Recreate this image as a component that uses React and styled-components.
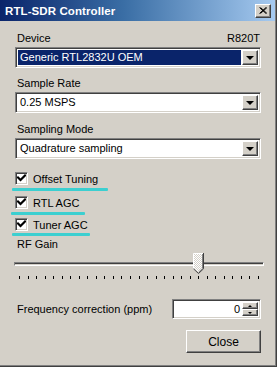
import React from 'react';
import styled, { createGlobalStyle, css } from 'styled-components';

const GlobalStyle = createGlobalStyle`
  html, body {
    margin: 0;
    padding: 0;
    background: #d4d0c8;
  }
  body {
    font-family: 'Liberation Sans', Arial, sans-serif;
    font-size: 11px;
    color: #000;
  }
`;

const sunken = css`
  border: 1px solid;
  border-color: #808080 #fff #fff #808080;
  box-shadow: inset 1px 1px 0 #404040, inset -1px -1px 0 #d4d0c8;
`;

const raised = css`
  border: 1px solid;
  border-color: #fff #404040 #404040 #fff;
  box-shadow: inset -1px -1px 0 #808080, inset 1px 1px 0 #d4d0c8;
`;

const Window = styled.div`
  width: 277px;
  height: 367px;
  box-sizing: border-box;
  background: #d4d0c8;
  border-right: 1px solid #404040;
  border-bottom: 1px solid #404040;
  box-shadow: inset -1px -1px 0 #808080;
  display: flex;
  flex-direction: column;
`;

const TitleBar = styled.div`
  height: 21px;
  margin-right: 1px;
  background: linear-gradient(90deg, #0a246a 0%, #3a6ea5 45%, #a6caf0 100%);
  display: flex;
  align-items: center;
  justify-content: space-between;
  padding: 0 4px 0 5px;
`;

const Title = styled.span`
  color: #fff;
  font-weight: bold;
  font-size: 11.5px;
  letter-spacing: 0.1px;
`;

const CloseBox = styled.div`
  width: 16px;
  height: 14px;
  box-sizing: border-box;
  background: #d4d0c8;
  ${raised};
  display: flex;
  align-items: center;
  justify-content: center;
`;

const Body = styled.div`
  display: flex;
  flex-direction: column;
  padding: 11px 15px 0 15px;
`;

const LabelRow = styled.div`
  height: 13px;
  line-height: 13px;
  margin-top: ${({ $mt }) => $mt || 0}px;
  padding: 0 1px 0 2px;
  display: flex;
  justify-content: space-between;
`;

const Combo = styled.div`
  height: 21px;
  margin-top: 2px;
  box-sizing: border-box;
  background: #fff;
  ${sunken};
  display: flex;
  align-items: stretch;
  padding: 2px;
`;

const ComboText = styled.div`
  flex: 1;
  margin-right: 1px;
  padding-left: 2px;
  line-height: 15px;
  white-space: nowrap;
  overflow: hidden;
  ${({ $selected }) => $selected && `
    background: #0a246a;
    color: #fff;
  `}
`;

const DropButton = styled.div`
  width: 16px;
  box-sizing: border-box;
  background: #d4d0c8;
  ${raised};
  display: flex;
  align-items: center;
  justify-content: center;
`;

const Arrow = styled.span`
  width: 0;
  height: 0;
  border-left: ${({ $size }) => $size || 4}px solid transparent;
  border-right: ${({ $size }) => $size || 4}px solid transparent;
  ${({ $up, $size }) => $up
    ? `border-bottom: ${($size || 4)}px solid #000;`
    : `border-top: ${($size || 4)}px solid #000;`}
`;

const CheckRow = styled.div`
  height: 13px;
  margin-top: ${({ $mt }) => $mt}px;
  display: flex;
  align-items: center;
  gap: 5px;
`;

const CheckBox = styled.div`
  width: 13px;
  height: 13px;
  box-sizing: border-box;
  background: #fff;
  ${sunken};
  display: flex;
  align-items: center;
  justify-content: center;
`;

const Highlight = styled.div`
  height: 3px;
  width: ${({ $w }) => $w}px;
  margin: ${({ $mt }) => $mt}px 0 0 ${({ $ml }) => $ml}px;
  background: #3ccfd0;
  border-radius: 1px;
`;

const SliderArea = styled.div`
  position: relative;
  height: 21px;
  margin: 2px 0 0 -1px;
  width: 250px;
  display: flex;
  align-items: center;
`;

const Track = styled.div`
  width: 100%;
  height: 4px;
  box-sizing: border-box;
  border: 1px solid;
  border-color: #808080 #fff #fff #808080;
  background: #404040;
  box-shadow: inset 0 -1px 0 #d4d0c8;
`;

const Thumb = styled.svg`
  position: absolute;
  top: 0;
`;

const Ticks = styled.div`
  position: relative;
  height: 4px;
  margin: 2px 0 0 -1px;
  width: 250px;
`;

const Tick = styled.span`
  position: absolute;
  top: 0;
  width: 1px;
  height: 3px;
  background: #000;
`;

const FreqRow = styled.div`
  margin-top: 19px;
  display: flex;
  align-items: center;
  justify-content: space-between;
  padding-left: 2px;
`;

const SpinBox = styled.div`
  width: 89px;
  height: 20px;
  box-sizing: border-box;
  background: #fff;
  ${sunken};
  display: flex;
  padding: 2px;
`;

const SpinValue = styled.div`
  flex: 1;
  text-align: right;
  line-height: 14px;
  padding-right: 2px;
`;

const SpinButtons = styled.div`
  width: 16px;
  display: flex;
  flex-direction: column;
`;

const SpinButton = styled.div`
  flex: 1;
  box-sizing: border-box;
  background: #d4d0c8;
  ${raised};
  display: flex;
  align-items: center;
  justify-content: center;
`;

const Footer = styled.div`
  margin-top: 11px;
  display: flex;
  justify-content: flex-end;
`;

const Button = styled.div`
  width: 75px;
  height: 23px;
  box-sizing: border-box;
  background: #d4d0c8;
  ${raised};
  display: flex;
  align-items: center;
  justify-content: center;
  font-size: 12px;
`;

const Check = () => (
  <svg width="9" height="9" viewBox="0 0 9 9">
    <path d="M1 3.5 L3.5 6 L8 1.5" fill="none" stroke="#000" strokeWidth="2.2" strokeLinecap="square" />
  </svg>
);

const checks = [
  { label: 'Offset Tuning', mt: 13, hl: { w: 96, mt: 3, ml: -3 } },
  { label: 'RTL AGC', mt: 5, hl: { w: 74, mt: 3, ml: -4 } },
  { label: 'Tuner AGC', mt: 3, hl: { w: 78, mt: 2, ml: -3 } },
];

const TICKS = 29;
const GAIN_INDEX = 21;

export default function App() {
  const span = 250 - 11;
  const thumbLeft = Math.round((GAIN_INDEX / (TICKS - 1)) * span);

  return (
    <>
      <GlobalStyle />
      <Window>
        <TitleBar>
          <Title>RTL-SDR Controller</Title>
          <CloseBox>
            <svg width="8" height="7" viewBox="0 0 8 7">
              <path d="M0.5 0.5 L7 6.5 M1.5 0.5 L8 6.5 M7 0.5 L0.5 6.5 M8 0.5 L1.5 6.5" stroke="#000" strokeWidth="1" />
            </svg>
          </CloseBox>
        </TitleBar>
        <Body>
          <LabelRow>
            <span>Device</span>
            <span>R820T</span>
          </LabelRow>
          <Combo>
            <ComboText $selected>Generic RTL2832U OEM</ComboText>
            <DropButton><Arrow /></DropButton>
          </Combo>

          <LabelRow $mt={9}><span>Sample Rate</span></LabelRow>
          <Combo>
            <ComboText>0.25 MSPS</ComboText>
            <DropButton><Arrow /></DropButton>
          </Combo>

          <LabelRow $mt={10}><span>Sampling Mode</span></LabelRow>
          <Combo>
            <ComboText>Quadrature sampling</ComboText>
            <DropButton><Arrow /></DropButton>
          </Combo>

          {checks.map((c) => (
            <React.Fragment key={c.label}>
              <CheckRow $mt={c.mt}>
                <CheckBox><Check /></CheckBox>
                <span>{c.label}</span>
              </CheckRow>
              <Highlight $w={c.hl.w} $mt={c.hl.mt} $ml={c.hl.ml} />
            </React.Fragment>
          ))}

          <LabelRow $mt={2}><span>RF Gain</span></LabelRow>
          <SliderArea>
            <Track />
            <Thumb width="11" height="21" viewBox="0 0 11 21" style={{ left: thumbLeft }}>
              <defs>
                <pattern id="dither" width="2" height="2" patternUnits="userSpaceOnUse">
                  <rect width="2" height="2" fill="#fff" />
                  <rect width="1" height="1" fill="#d4d0c8" />
                  <rect x="1" y="1" width="1" height="1" fill="#d4d0c8" />
                </pattern>
              </defs>
              <path d="M0 0 H11 V16 L5.5 21 L0 16 Z" fill="url(#dither)" />
              <path d="M0.5 15.5 V0.5 H10" fill="none" stroke="#fff" />
              <path d="M10.5 0 V15.8 L5.5 20.5 L0.5 15.8" fill="none" stroke="#404040" />
              <path d="M9.5 1 V15.4 L5.5 19.2" fill="none" stroke="#808080" />
            </Thumb>
          </SliderArea>
          <Ticks>
            {Array.from({ length: TICKS }, (_, i) => (
              <Tick key={i} style={{ left: Math.round(5 + (i / (TICKS - 1)) * span) }} />
            ))}
          </Ticks>

          <FreqRow>
            <span>Frequency correction (ppm)</span>
            <SpinBox>
              <SpinValue>0</SpinValue>
              <SpinButtons>
                <SpinButton><Arrow $up $size={2} /></SpinButton>
                <SpinButton><Arrow $size={2} /></SpinButton>
              </SpinButtons>
            </SpinBox>
          </FreqRow>

          <Footer>
            <Button>Close</Button>
          </Footer>
        </Body>
      </Window>
    </>
  );
}
